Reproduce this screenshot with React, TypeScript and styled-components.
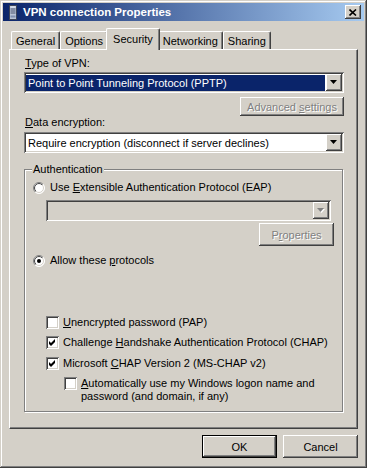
import React from "react";
import styled, { createGlobalStyle, css } from "styled-components";

const GlobalStyle = createGlobalStyle`
  html, body { margin: 0; padding: 0; background: #d4d0c8; }
  body { font-family: "Liberation Sans", Arial, sans-serif; font-size: 11px; color: #000; }
  * { box-sizing: border-box; }
`;

const raised = css`
  box-shadow: inset -1px -1px #404040, inset 1px 1px #fff, inset -2px -2px #808080,
    inset 2px 2px #d4d0c8;
`;
const sunken = css`
  box-shadow: inset 1px 1px #808080, inset -1px -1px #fff, inset 2px 2px #404040,
    inset -2px -2px #d4d0c8;
`;

const Window = styled.div`
  width: 367px;
  height: 468px;
  padding: 3px;
  background: #d4d0c8;
  box-shadow: inset -1px -1px #404040, inset 1px 1px #d4d0c8, inset -2px -2px #808080,
    inset 2px 2px #fff;
  display: flex;
  flex-direction: column;
`;

const TitleBar = styled.div`
  height: 18px;
  display: flex;
  align-items: center;
  padding: 0 3px 0 2px;
  background: linear-gradient(to right, #0a246a, #a6caf0);
  color: #fff;
  font-weight: bold;
  font-size: 11.5px;
`;

const TitleText = styled.span`
  flex: 1;
  margin-left: 2px;
  white-space: nowrap;
`;

const CaptionButton = styled.div`
  width: 16px;
  height: 14px;
  background: #d4d0c8;
  ${raised};
  display: flex;
  align-items: center;
  justify-content: center;
`;

const Body = styled.div`
  flex: 1;
  display: flex;
  flex-direction: column;
  padding: 7px 6px 7px 6px;
`;

const TabRow = styled.div`
  display: flex;
  align-items: flex-end;
  height: 21px;
  padding-left: 2px;
  position: relative;
  z-index: 1;
`;

const Tab = styled.div<{ $active?: boolean }>`
  height: 18px;
  padding: 0 4px;
  display: flex;
  align-items: center;
  background: #d4d0c8;
  border-top: 1px solid #fff;
  border-left: 1px solid #fff;
  border-right: 1px solid #404040;
  box-shadow: inset -1px 0 #808080;
  border-radius: 2px 2px 0 0;
  white-space: nowrap;
  ${(p) =>
    p.$active &&
    css`
      height: 22px;
      margin: 0 -2px -1px;
      padding: 0 6px 2px;
      position: relative;
      z-index: 2;
    `}
`;

const Panel = styled.div`
  flex: 1;
  display: flex;
  flex-direction: column;
  padding: 7px 13px 0 14px;
  border-top: 1px solid #fff;
  border-left: 1px solid #fff;
  border-right: 1px solid #404040;
  border-bottom: 1px solid #404040;
  box-shadow: inset -1px -1px #808080;
`;

const FieldLabel = styled.div<{ $gap?: number }>`
  height: 13px;
  line-height: 13px;
  padding-left: 1px;
  margin-top: ${(p) => p.$gap ?? 0}px;
`;

const AccessKey = styled.u`
  text-decoration: underline;
  text-underline-offset: 1px;
`;

const Combo = styled.div<{ $disabled?: boolean; $gap?: number; $inset?: number; $right?: number }>`
  height: 21px;
  display: flex;
  align-items: stretch;
  padding: 2px;
  margin-top: ${(p) => p.$gap ?? 0}px;
  margin-left: ${(p) => p.$inset ?? 0}px;
  margin-right: ${(p) => p.$right ?? 0}px;
  background: ${(p) => (p.$disabled ? "#d4d0c8" : "#fff")};
  ${sunken};
`;

const ComboValue = styled.div<{ $selected?: boolean }>`
  flex: 1;
  margin: 1px 1px 0 0;
  padding-left: 2px;
  display: flex;
  align-items: center;
  white-space: nowrap;
  ${(p) =>
    p.$selected &&
    css`
      background: #0a246a;
      color: #fff;
    `}
`;

const DropButton = styled.div`
  width: 16px;
  height: 17px;
  background: #d4d0c8;
  ${raised};
  display: flex;
  align-items: center;
  justify-content: center;
`;

const ButtonLine = styled.div<{ $gap?: number; $right?: number }>`
  display: flex;
  justify-content: flex-end;
  margin-top: ${(p) => p.$gap ?? 0}px;
  margin-right: ${(p) => p.$right ?? 0}px;
`;

const PushButton = styled.button<{ $w: number; $h?: number; $default?: boolean }>`
  width: ${(p) => p.$w}px;
  height: ${(p) => p.$h ?? 23}px;
  padding: 0;
  border: none;
  font: inherit;
  color: #000;
  background: #d4d0c8;
  ${raised};
  ${(p) =>
    p.$default &&
    css`
      border: 1px solid #000;
      box-shadow: inset -1px -1px #404040, inset 1px 1px #fff, inset -2px -2px #808080;
    `}
  &:disabled {
    color: #808080;
    text-shadow: 1px 1px #fff;
  }
`;

const GroupBox = styled.fieldset`
  margin: 10px 1px 0 0;
  padding: 5px 8px 8px 8px;
  border: 1px solid #808080;
  box-shadow: inset 1px 1px #fff, 1px 1px #fff;
  min-width: 0;
`;

const GroupLegend = styled.legend`
  padding: 0 1px;
  margin-left: -1px;
  line-height: 13px;
  background: #d4d0c8;
`;

const OptionRow = styled.div<{ $indent?: number; $gap?: number; $box?: number }>`
  display: flex;
  align-items: flex-start;
  gap: ${(p) => p.$box ?? 4}px;
  margin-left: ${(p) => p.$indent ?? 0}px;
  margin-top: ${(p) => p.$gap ?? 0}px;
  line-height: 13px;
`;

const CheckBox = styled.span`
  width: 13px;
  height: 13px;
  flex: none;
  background: #fff;
  ${sunken};
  display: inline-flex;
  align-items: center;
  justify-content: center;
`;

const RadioWrap = styled.span`
  width: 12px;
  height: 12px;
  flex: none;
  display: inline-flex;
  margin-top: 1px;
`;

const ButtonRow = styled.div`
  display: flex;
  justify-content: flex-end;
  gap: 6px;
  margin-top: 6px;
`;

const Arrow = ({ disabled }: { disabled?: boolean }) => (
  <svg width="8" height="5" viewBox="0 0 8 5">
    {disabled && <polygon points="1,1 8,1 4.5,5" fill="#fff" />}
    <polygon points="0,0 7,0 3.5,4" fill={disabled ? "#808080" : "#000"} />
  </svg>
);

const Radio = ({ checked }: { checked?: boolean }) => (
  <RadioWrap>
    <svg width="12" height="12" viewBox="0 0 12 12">
      <defs>
        <linearGradient id="ro" x1="0" y1="0" x2="1" y2="1">
          <stop offset="0.5" stopColor="#808080" />
          <stop offset="0.5" stopColor="#ffffff" />
        </linearGradient>
        <linearGradient id="ri" x1="0" y1="0" x2="1" y2="1">
          <stop offset="0.5" stopColor="#404040" />
          <stop offset="0.5" stopColor="#d4d0c8" />
        </linearGradient>
      </defs>
      <circle cx="6" cy="6" r="5.5" fill="#fff" stroke="url(#ro)" strokeWidth="1" />
      <circle cx="6" cy="6" r="4.5" fill="#fff" stroke="url(#ri)" strokeWidth="1" />
      {checked && <circle cx="6" cy="6" r="2" fill="#000" />}
    </svg>
  </RadioWrap>
);

const Check = ({ checked }: { checked?: boolean }) => (
  <CheckBox>
    {checked && (
      <svg width="7" height="7" viewBox="0 0 7 7">
        <polygon points="0,2 2,4 6,0 6,3 2,7 0,5" fill="#000" />
      </svg>
    )}
  </CheckBox>
);

const TitleIcon = () => (
  <svg width="16" height="16" viewBox="0 0 16 16">
    <rect x="4.5" y="1.5" width="7" height="14" fill="#b9c3d6" stroke="#3b4358" />
    <rect x="5.5" y="2.5" width="5" height="1" fill="#eef2fa" />
    <rect x="5.5" y="4.5" width="5" height="1" fill="#4c5670" />
    <rect x="5.5" y="6.5" width="5" height="1" fill="#4c5670" />
    <rect x="5.5" y="8.5" width="5" height="1" fill="#4c5670" />
    <rect x="5.5" y="11.5" width="5" height="2" fill="#8090b0" />
  </svg>
);

const CloseGlyph = () => (
  <svg width="8" height="7" viewBox="0 0 8 7">
    <path d="M0.5 0.5 L7 6.5 M7 0.5 L0.5 6.5" stroke="#000" strokeWidth="1.6" />
  </svg>
);

export default function App() {
  return (
    <>
      <GlobalStyle />
      <Window>
        <TitleBar>
          <TitleIcon />
          <TitleText>VPN connection Properties</TitleText>
          <CaptionButton>
            <CloseGlyph />
          </CaptionButton>
        </TitleBar>
        <Body>
          <TabRow>
            <Tab>General</Tab>
            <Tab>Options</Tab>
            <Tab $active>Security</Tab>
            <Tab>Networking</Tab>
            <Tab>Sharing</Tab>
          </TabRow>
          <Panel>
            <FieldLabel>
              <AccessKey>T</AccessKey>ype of VPN:
            </FieldLabel>
            <Combo $gap={2}>
              <ComboValue $selected>Point to Point Tunneling Protocol (PPTP)</ComboValue>
              <DropButton>
                <Arrow />
              </DropButton>
            </Combo>
            <ButtonLine $gap={4}>
              <PushButton $w={104} $h={19} disabled>
                Advanced <AccessKey>s</AccessKey>ettings
              </PushButton>
            </ButtonLine>
            <FieldLabel>
              <AccessKey>D</AccessKey>ata encryption:
            </FieldLabel>
            <Combo $gap={3}>
              <ComboValue>Require encryption (disconnect if server declines)</ComboValue>
              <DropButton>
                <Arrow />
              </DropButton>
            </Combo>
            <GroupBox>
              <GroupLegend>Authentication</GroupLegend>
              <OptionRow $box={5}>
                <Radio />
                <span>
                  Use <AccessKey>E</AccessKey>xtensible Authentication Protocol (EAP)
                </span>
              </OptionRow>
              <Combo $disabled $gap={6} $inset={13} $right={3}>
                <ComboValue />
                <DropButton>
                  <Arrow disabled />
                </DropButton>
              </Combo>
              <ButtonLine $gap={2}>
                <PushButton $w={75} disabled>
                  P<AccessKey>r</AccessKey>operties
                </PushButton>
              </ButtonLine>
              <OptionRow $box={5} $gap={8}>
                <Radio checked />
                <span>
                  Allow these <AccessKey>p</AccessKey>rotocols
                </span>
              </OptionRow>
              <OptionRow $indent={13} $gap={49}>
                <Check />
                <span>
                  <AccessKey>U</AccessKey>nencrypted password (PAP)
                </span>
              </OptionRow>
              <OptionRow $indent={13} $gap={7}>
                <Check checked />
                <span>
                  Challenge <AccessKey>H</AccessKey>andshake Authentication Protocol (CHAP)
                </span>
              </OptionRow>
              <OptionRow $indent={13} $gap={8}>
                <Check checked />
                <span>
                  Microsoft <AccessKey>C</AccessKey>HAP Version 2 (MS-CHAP v2)
                </span>
              </OptionRow>
              <OptionRow $indent={31} $gap={7}>
                <Check />
                <span>
                  <AccessKey>A</AccessKey>utomatically use my Windows logon name and
                  <br />
                  password (and domain, if any)
                </span>
              </OptionRow>
            </GroupBox>
          </Panel>
          <ButtonRow>
            <PushButton $w={75} $default>
              OK
            </PushButton>
            <PushButton $w={75}>Cancel</PushButton>
          </ButtonRow>
        </Body>
      </Window>
    </>
  );
}
